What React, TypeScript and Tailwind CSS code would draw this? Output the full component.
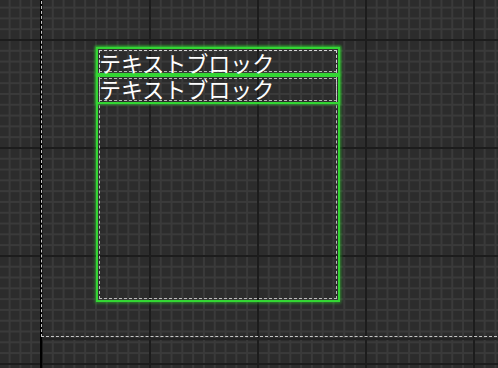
import React from 'react';

const GREEN = 'border-[#33d633]';

const TextRow: React.FC<{ label: string; h: string; pt: string }> = ({ label, h, pt }) => (
  <div className={`relative ${h} border-2 ${GREEN} shadow-[0_0_2px_1px_rgba(51,214,51,0.55)]`}>
    <div className="absolute inset-px border border-dashed border-[#dcdcdc]/80" />
    <span className={`relative block pl-px ${pt} text-[22px] leading-[22px] text-white whitespace-nowrap font-['Noto_Sans_CJK_JP',sans-serif]`}>
      {label}
    </span>
  </div>
);

export default function App() {
  return (
    <div className="relative w-[498px] h-[368px] overflow-hidden bg-[#2c2c2c] [background-image:linear-gradient(to_right,#1c1c1c_2px,transparent_2px),linear-gradient(to_bottom,#1c1c1c_2px,transparent_2px),linear-gradient(to_right,#3a3a3a_2px,transparent_2px),linear-gradient(to_bottom,#3a3a3a_2px,transparent_2px)] [background-size:108px_108px,108px_108px,10.8px_10.8px,10.8px_10.8px] [background-position:41px_0,0_39px,41px_0,0_39px]">
      {/* canvas edge */}
      <div className="absolute left-[40px] top-0 bottom-0 w-[2px] bg-black" />
      <div className="absolute left-[41px] top-[-4px] right-[-4px] h-[341px] border-l border-b border-dashed border-[#c4c4c4]" />
      <div className="absolute left-[42px] right-0 top-[338px] h-[2px] bg-[#222]" />

      {/* selected layout group */}
      <div className={`absolute left-[96px] top-[47px] w-[244px] h-[255px] border-2 ${GREEN} shadow-[0_0_3px_1px_rgba(51,214,51,0.55)]`}>
        <div className="absolute inset-px border border-dashed border-[#dcdcdc]/80" />
        <div className="relative -m-[2px] flex flex-col">
          <TextRow label="テキストブロック" h="h-[28px]" pt="pt-[2px]" />
          <TextRow label="テキストブロック" h="h-[29px]" pt="pt-0" />
        </div>
      </div>
    </div>
  );
}
